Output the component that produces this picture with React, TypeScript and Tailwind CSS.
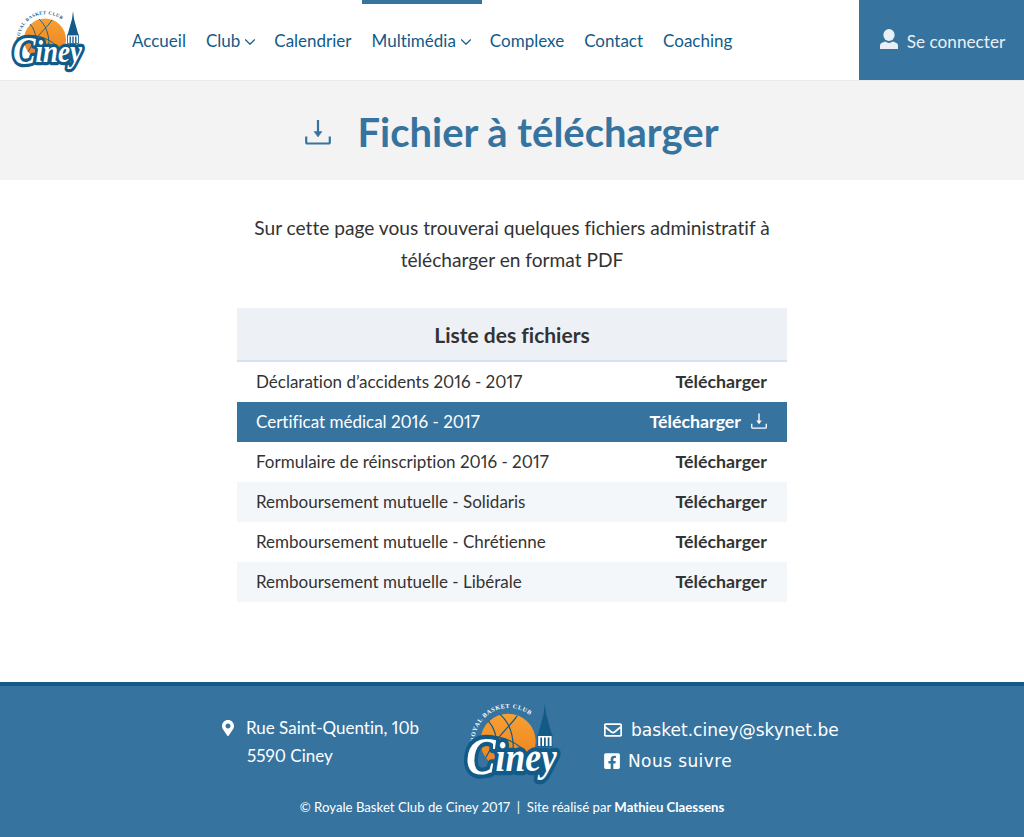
import React from 'react';
import { ChevronDown } from 'lucide-react';
import { FaFacebookSquare, FaMapMarkerAlt, FaRegEnvelope } from 'react-icons/fa';

const navItems = [
  { label: 'Accueil' },
  { label: 'Club', caret: true },
  { label: 'Calendrier' },
  { label: 'Multimédia', caret: true, active: true },
  { label: 'Complexe', tight: true },
  { label: 'Contact' },
  { label: 'Coaching' },
];

const files = [
  { name: 'Déclaration d’accidents 2016 - 2017' },
  { name: 'Certificat médical 2016 - 2017', hover: true },
  { name: 'Formulaire de réinscription 2016 - 2017' },
  { name: 'Remboursement mutuelle - Solidaris', striped: true },
  { name: 'Remboursement mutuelle - Chrétienne' },
  { name: 'Remboursement mutuelle - Libérale', striped: true },
];

const Logo = ({ className, ringText, id }: { className: string; ringText: string; id: string }) => (
  <svg viewBox="0 0 76 60" className={`overflow-visible ${className}`}>
    <defs>
      <path id={id} d="M9.5 30 A26 26 0 0 1 59 19" fill="none" />
      <linearGradient id={`${id}-ball`} x1="0" y1="0" x2="0" y2="1">
        <stop offset="0" stopColor="#f6a033" />
        <stop offset="1" stopColor="#ee7f1c" />
      </linearGradient>
    </defs>
    <circle cx="35" cy="29.5" r="21" fill={`url(#${id}-ball)`} />
    <g fill="none" stroke="#125a88" strokeWidth="0.9">
      <path d="M14.5 26 C26 24 42 28 52 42" />
      <path d="M29 9 C39 18 41 32 37 50" />
      <path d="M42 10 C37 18 27 24 18 42" />
      <path d="M20 14 C27 22 28 34 24 48" />
    </g>
    <text fontFamily="'Liberation Serif', serif" fontSize="4.6" fontWeight="700" fill={ringText} letterSpacing="0.5">
      <textPath href={`#${id}`}>ROYAL BASKET CLUB</textPath>
    </text>
    <path d="M63 1 L64 9 L66.5 18 L68.5 25 L57.5 25 L59.5 18 L62 9 Z" fill="#125a88" />
    <rect x="57.5" y="25" width="11" height="8.5" fill="#ffffff" stroke="#125a88" strokeWidth="0.8" />
    <path d="M60.2 26.5 V33 M63 26.5 V33 M65.8 26.5 V33" stroke="#125a88" strokeWidth="1.3" />
    <text
      x="3"
      y="54"
      textLength="69"
      lengthAdjust="spacingAndGlyphs"
      fontFamily="'Liberation Serif', serif"
      fontStyle="italic"
      fontWeight="700"
      fontSize="32"
      fill="#ffffff"
      stroke="#125a88"
      strokeWidth="6.5"
      strokeLinejoin="round"
      paintOrder="stroke"
    >
      <tspan fontSize="40">C</tspan>
      <tspan dy="-2">iney</tspan>
    </text>
  </svg>
);

const DownloadIcon = ({ className }: { className: string }) => (
  <svg viewBox="0 0 26 26" className={className} fill="none" stroke="currentColor" strokeWidth="2.2">
    <path d="M13 1 V16" />
    <path d="M9 12.5 H17 L13 18 Z" fill="currentColor" strokeWidth="0.5" />
    <path d="M1.2 17.5 V23 Q1.2 24.5 2.7 24.5 H23.3 Q24.8 24.5 24.8 23 V17.5" />
  </svg>
);

const UserIcon = () => (
  <svg viewBox="0 0 18 20" className="mb-[6px] h-[20px] w-[18px] fill-current text-[#e9f0f5]">
    <ellipse cx="9" cy="6" rx="5.6" ry="6" />
    <path d="M0 20 V16.5 Q0 14.5 2 13.8 L5.2 12.6 Q9 15.4 12.8 12.6 L16 13.8 Q18 14.5 18 16.5 V20 Z" />
  </svg>
);

const App = () => {
  return (
    <div className="flex min-h-[837px] flex-col bg-white font-['Lato',sans-serif] text-[#333333] proportional-nums [font-variant-ligatures:none]">
      <header className="flex h-[80px] items-stretch">
        <Logo id="logo-top" ringText="#125a88" className="ml-[10px] mt-[10px] h-[60px] w-[76px] shrink-0" />
        <nav className="ml-[36px] flex flex-1 items-center text-[17px] text-[#125a88]">
          {navItems.map((item) => (
            <a
              key={item.label}
              className={`relative flex h-full items-center pl-[10px] pt-[2px] ${item.active ? 'pr-[12px]' : 'pr-[10px]'} ${
                item.tight ? '-ml-[2px]' : ''
              }`}
            >
              {item.active && <span className="absolute left-0 right-0 top-0 h-[4px] bg-[#36749f]" />}
              {item.label}
              {item.caret && <ChevronDown size={18} strokeWidth={1.5} className="ml-[1px] -mr-[5px] mt-[1px]" />}
            </a>
          ))}
        </nav>
        <a className="flex w-[165px] items-center justify-center gap-[9px] bg-[#36749f] pl-[2px] pt-[3px] text-[17.2px] text-[#e9f0f5]">
          <UserIcon />
          Se connecter
        </a>
      </header>

      <section className="flex h-[100px] items-center justify-center gap-[26px] border-t border-[#ebebeb] bg-[#f3f3f3] pt-[2px] text-[#36749f]">
        <DownloadIcon className="h-[26px] w-[26px]" />
        <h1 className="text-[40px] font-bold">Fichier à télécharger</h1>
      </section>

      <main className="mx-auto w-[550px] flex-1 pt-[32px]">
        <p className="text-center text-[19.15px] leading-[32px]">
          Sur cette page vous trouverai quelques fichiers administratif à
          <br />
          télécharger en format PDF
        </p>
        <div className="mt-[32px]">
          <div className="flex h-[54px] items-center justify-center border-b-2 border-[#d6e3ee] bg-[#edf1f5] pt-[2px] text-[21px] font-bold">
            Liste des fichiers
          </div>
          {files.map((file) => (
            <div
              key={file.name}
              className={`flex h-[40px] items-center justify-between pl-[19px] pr-[20px] text-[17px] ${
                file.hover ? 'bg-[#36749f] text-[#ffffff]' : file.striped ? 'bg-[#f4f7fa]' : 'bg-white'
              }`}
            >
              <span>{file.name}</span>
              <span className="flex items-center gap-[10px] pb-[2px] text-[17.8px] font-bold">
                Télécharger
                {file.hover && <DownloadIcon className="h-[16px] w-[16px]" />}
              </span>
            </div>
          ))}
        </div>
      </main>

      <footer className="h-[155px] border-t-4 border-[#125a88] bg-[#36749f] text-white">
        <div className="ml-[222px] flex h-[101px] items-center">
          <div className="w-[240px] pt-[10px] text-[17px] leading-[28px]">
            <div className="flex items-center gap-[10px]">
              <FaMapMarkerAlt size={16} className="-ml-[2px]" />
              Rue Saint-Quentin, 10b
            </div>
            <div className="pl-[25px]">5590 Ciney</div>
          </div>
          <Logo id="logo-bottom" ringText="#ffffff" className="mt-[10px] h-[80px] w-[100px] shrink-0" />
          <div className="ml-[42px] pt-[18px] font-['DejaVu_Sans',sans-serif] text-[17px] leading-[31px] tracking-[0.4px]">
            <div className="flex items-center gap-[9px] tracking-[0.04px]">
              <FaRegEnvelope size={18} />
              basket.ciney@skynet.be
            </div>
            <div className="flex items-center gap-[7px]">
              <FaFacebookSquare size={18} className="-ml-px" />
              Nous suivre
            </div>
          </div>
        </div>
        <p className="mt-[11px] text-center text-[13.2px]">
          © Royale Basket Club de Ciney 2017 &nbsp;|&nbsp; Site réalisé par <strong>Mathieu Claessens</strong>
        </p>
      </footer>
    </div>
  );
};

export default App;
